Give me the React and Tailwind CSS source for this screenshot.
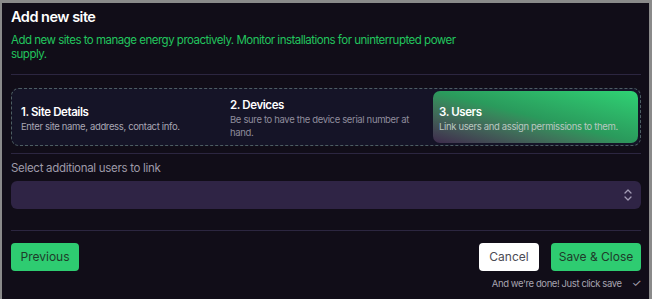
import React from "react";

export default function App() {
  return (
    <div
      className="w-[652px] h-[299px] overflow-hidden bg-[#8a8a8a] pt-[3px] pl-[2px] pr-[3px]"
      style={{ fontFamily: "Inter, 'Liberation Sans', sans-serif" }}
    >
      <div className="h-full bg-[#110d18] pl-[9px] pr-[8px]">
        <div className="pt-[5px]">
          <h1 className="text-[14.5px] leading-[18px] font-semibold text-white tracking-[-0.5px]">Add new site</h1>
          <p className="mt-[7px] w-[455px] text-[11.5px] leading-[14px] text-[#22c55e] tracking-[-0.5px]">
            Add new sites to manage energy proactively. Monitor installations for uninterrupted power supply.
          </p>
        </div>
        <div className="mt-[13px] h-px bg-[#2c2640]" />
        <div className="mt-[13px] h-[58px] rounded-[8px] border border-dashed border-[#4d5e63] bg-[#151427] p-[2px] grid grid-cols-[209px_210px_1fr] items-center">
          <div className="pl-[7px] pt-[4px]">
            <div className="text-[11.5px] leading-[15px] font-semibold text-white tracking-[-0.4px]">1. Site Details</div>
            <div className="text-[9.5px] leading-[13px] text-[#a8a6b3] tracking-[-0.35px]">Enter site name, address, contact info.</div>
          </div>
          <div className="pl-[7px] pt-[2px]">
            <div className="text-[11.5px] leading-[15px] font-semibold text-white tracking-[-0.4px]">2. Devices</div>
            <div className="w-[185px] text-[9.5px] leading-[13px] text-[#8f8c9c] tracking-[-0.35px]">Be sure to have the device serial number at hand.</div>
          </div>
          <div className="h-full rounded-[7px] bg-gradient-to-tr from-[#3d2a4c] via-[#2a9a5c] to-[#2fd374] pl-[6px] pt-[4px] flex flex-col justify-center">
            <div className="text-[11.5px] leading-[15px] font-semibold text-white tracking-[-0.4px]">3. Users</div>
            <div className="text-[9.5px] leading-[13px] text-[#b9c8c0] tracking-[-0.35px]">Link users and assign permissions to them.</div>
          </div>
        </div>
        <div className="mt-[7px] h-px bg-[#2c2640]" />
        <div className="mt-[7px] text-[11.5px] leading-[15px] text-[#9e9aa8] tracking-[-0.3px]">Select additional users to link</div>
        <div className="mt-[5px] h-[28px] rounded-[6px] bg-[#2f2445] flex items-center justify-end pr-[8px]">
          <svg width="10" height="14" viewBox="0 0 10 14" fill="none" stroke="#a39cb5" strokeWidth="1.3" strokeLinecap="round" strokeLinejoin="round">
            <path d="M2 5 L5 2 L8 5" />
            <path d="M2 9 L5 12 L8 9" />
          </svg>
        </div>
        <div className="mt-[21px] h-px bg-[#2c2640]" />
        <div className="mt-[12px] flex items-start justify-between">
          <button className="h-[28px] w-[68px] rounded-[4px] bg-[#2ecc71] text-[12px] text-[#1f3b2a]">Previous</button>
          <div className="flex flex-col items-end">
            <div className="flex gap-[12px]">
              <button className="h-[28px] w-[60px] rounded-[4px] bg-white text-[12px] text-[#4b4b55]">Cancel</button>
              <button className="h-[28px] w-[90px] rounded-[4px] bg-[#2ecc71] text-[12px] text-[#1f3b2a]">Save &amp; Close</button>
            </div>
            <div className="mt-[6px] flex items-center gap-[10px] text-[9.5px] leading-[13px] text-[#a7a4b0] tracking-[-0.4px]">
              <span>And we're done! Just click save</span>
              <span className="text-[11px] text-[#a7a4b0]">✓</span>
            </div>
          </div>
        </div>
      </div>
    </div>
  );
}
